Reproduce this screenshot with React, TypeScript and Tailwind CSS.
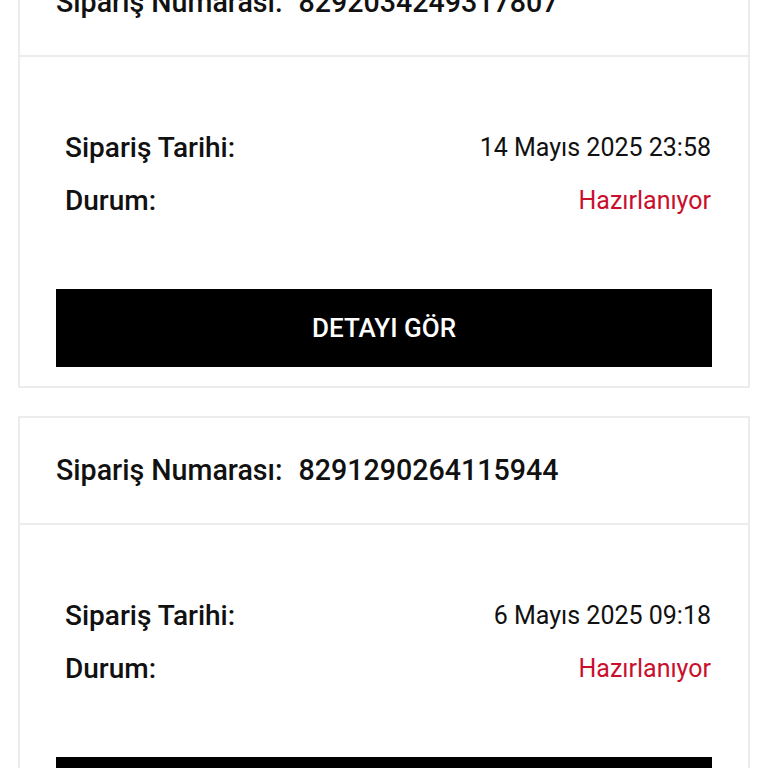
type Order = {
  orderNo: string;
  date: string;
  status: string;
};

const orders: Order[] = [
  { orderNo: '8292034249317807', date: '14 Mayıs 2025 23:58', status: 'Hazırlanıyor' },
  { orderNo: '8291290264115944', date: '6 Mayıs 2025 09:18', status: 'Hazırlanıyor' },
];

function OrderCard({ order }: { order: Order }) {
  return (
    <div className="border-2 border-[#ececec] bg-white">
      <div className="flex h-[107px] items-center border-b-2 border-[#ececec] px-[36px] text-[28.6px] font-medium text-[#111]">
        <span>Sipariş Numarası:</span>
        <span className="ml-[16px]">{order.orderNo}</span>
      </div>
      <div className="px-[36px] pt-[64px] pb-[19px]">
        <div className="pl-[9px] pr-px">
          <div className="flex h-[53px] items-center justify-between">
            <span className="text-[28px] font-medium text-[#111]">Sipariş Tarihi:</span>
            <span className="text-[25px] text-[#111]">{order.date}</span>
          </div>
          <div className="flex h-[53px] items-center justify-between">
            <span className="text-[28px] font-medium text-[#111]">Durum:</span>
            <span className="text-[25px] text-[#c8102e]">{order.status}</span>
          </div>
        </div>
        <button
          type="button"
          className="mt-[62px] flex h-[78px] w-full items-center justify-center bg-black text-[26px] font-medium text-white"
        >
          DETAYI GÖR
        </button>
      </div>
    </div>
  );
}

export default function App() {
  return (
    <div className="min-h-screen bg-white font-['Roboto',sans-serif]">
      <div className="mx-[18px] -mt-[52px] flex flex-col gap-[28px]">
        {orders.map((o) => (
          <OrderCard key={o.orderNo} order={o} />
        ))}
      </div>
    </div>
  );
}
